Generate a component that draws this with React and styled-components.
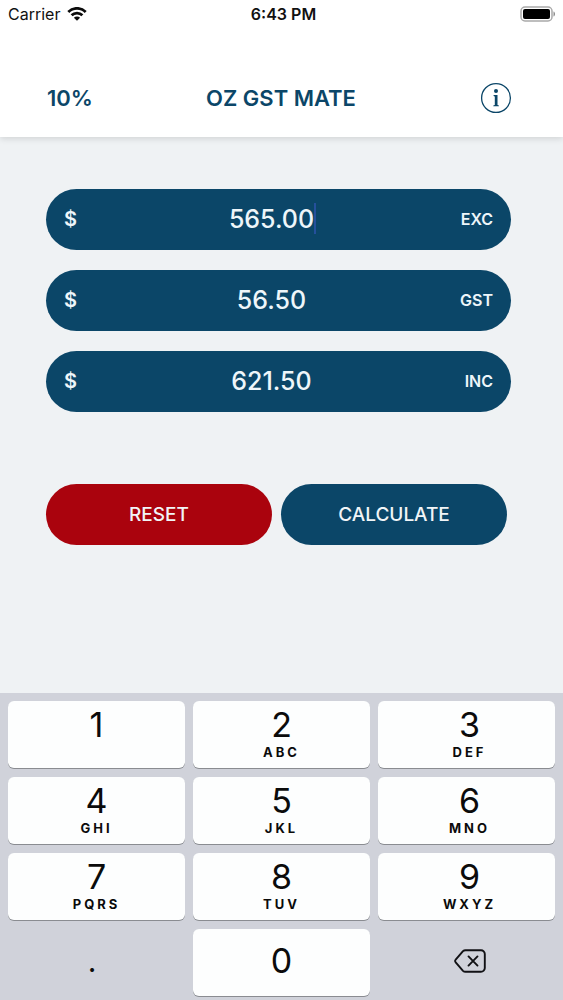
import React, { useState } from 'react';
import styled, { createGlobalStyle } from 'styled-components';

const GST_RATE = 0.1;

const KEYS = [
  { digit: '1' },
  { digit: '2', letters: 'ABC' },
  { digit: '3', letters: 'DEF' },
  { digit: '4', letters: 'GHI' },
  { digit: '5', letters: 'JKL' },
  { digit: '6', letters: 'MNO' },
  { digit: '7', letters: 'PQRS' },
  { digit: '8', letters: 'TUV' },
  { digit: '9', letters: 'WXYZ' },
];

const WifiIcon = () => (
  <svg width="20" height="14" viewBox="0 0 20 14" aria-label="Wi-Fi">
    <g fill="none" stroke="#0b0b0b" strokeWidth="2.8">
      <path d="M1.3 4.9a12.4 12.4 0 0 1 17.4 0" />
      <path d="M4.6 8.3a7.7 7.7 0 0 1 10.8 0" />
    </g>
    <path d="M10 13.8 6.9 10.7a4.4 4.4 0 0 1 6.2 0Z" fill="#0b0b0b" />
  </svg>
);

const BatteryIcon = () => (
  <svg width="36" height="16" viewBox="0 0 36 16" aria-label="Battery">
    <rect x="1" y="1" width="31" height="14" rx="4" fill="#fff" stroke="#a9a9a9" strokeWidth="1.5" />
    <rect x="3" y="3" width="27" height="10" rx="2" fill="#000" />
    <path d="M33.5 5.5c2 .6 2 4.4 0 5Z" fill="#8a8a8a" />
  </svg>
);

const InfoIcon = () => (
  <svg width="32" height="32" viewBox="0 0 32 32" aria-hidden="true">
    <circle cx="16" cy="16" r="14.4" fill="none" stroke="#0b4668" strokeWidth="1.3" />
    <circle cx="16" cy="8.9" r="2" fill="#0b4668" />
    <path d="M13.6 13.1h3.9v10l1.4.3v.8h-5.6v-.8l1.5-.3v-8.600l-1.200-.4Z" fill="#0b4668" />
  </svg>
);

const DeleteIcon = () => (
  <svg width="32" height="24" viewBox="0 0 32 24" aria-hidden="true">
    <g fill="none" stroke="#111114" strokeWidth="1.9" strokeLinecap="round" strokeLinejoin="round">
      <path d="M11.5 1.2H27a3.8 3.8 0 0 1 3.8 3.8v14a3.8 3.8 0 0 1-3.8 3.8H11.5c-1 0-1.800-.3-2.5-1L1.700 13.300c-.8-.8-.8-1.800 0-2.600L9 2.200c.7-.7 1.500-1 2.500-1Z" />
      <path d="m14.500 7.400 9 9.200M23.500 7.400l-9 9.200" />
    </g>
  </svg>
);

const App = () => {
  const [amounts, setAmounts] = useState({ exc: '565.00', gst: '56.50', inc: '621.50' });
  const [active, setActive] = useState('exc');

  const setAmount = (value) => setAmounts({ ...amounts, [active]: value });

  const handleReset = () => setAmounts({ exc: '', gst: '', inc: '' });

  const handleCalculate = () => {
    const value = parseFloat(amounts[active]) || 0;
    let exc = value;
    if (active === 'gst') exc = value / GST_RATE;
    if (active === 'inc') exc = value / (1 + GST_RATE);
    const gst = exc * GST_RATE;
    setAmounts({ exc: exc.toFixed(2), gst: gst.toFixed(2), inc: (exc + gst).toFixed(2) });
  };

  return (
    <Screen>
      <GlobalStyle />
      <StatusBar>
        <Carrier>
          Carrier
          <WifiIcon />
        </Carrier>
        <Clock>6:43 PM</Clock>
        <Battery>
          <BatteryIcon />
        </Battery>
      </StatusBar>

      <Header>
        <RateButton type="button">10%</RateButton>
        <Title>OZ GST MATE</Title>
        <InfoButton type="button" aria-label="Information">
          <InfoIcon />
        </InfoButton>
      </Header>

      <Main>
        <Fields>
          {['exc', 'gst', 'inc'].map((name) => (
            <Field key={name}>
              <Currency>$</Currency>
              <ValueBox>
                <Value
                  id={name}
                  inputMode="none"
                  value={amounts[name]}
                  onFocus={() => setActive(name)}
                  onChange={(e) => setAmounts({ ...amounts, [name]: e.target.value })}
                />
                {active === name && <Caret $chars={amounts[name].length} />}
              </ValueBox>
              <FieldLabel htmlFor={name}>{name.toUpperCase()}</FieldLabel>
            </Field>
          ))}
        </Fields>
        <Actions>
          <ActionButton type="button" $color="#aa030d" onClick={handleReset}>RESET</ActionButton>
          <ActionButton type="button" $color="#0b4668" onClick={handleCalculate}>CALCULATE</ActionButton>
        </Actions>
      </Main>

      <Keypad>
        {KEYS.map(({ digit, letters }) => (
          <Key key={digit} type="button" onClick={() => setAmount(amounts[active] + digit)}>
            <Digit>{digit}</Digit>
            <Letters>{letters}</Letters>
          </Key>
        ))}
        <PlainKey type="button" onClick={() => setAmount(amounts[active] + '.')}>
          <Point>.</Point>
        </PlainKey>
        <Key type="button" $centered onClick={() => setAmount(amounts[active] + '0')}>
          <Digit>0</Digit>
        </Key>
        <PlainKey
          type="button"
          aria-label="Delete"
          onClick={() => setAmount(amounts[active].slice(0, -1))}
        >
          <DeleteIcon />
        </PlainKey>
      </Keypad>
    </Screen>
  );
};

const GlobalStyle = createGlobalStyle`
  * {
    box-sizing: border-box;
  }

  body {
    margin: 0;
    font-family: Inter, "Liberation Sans", sans-serif;
    background: #eff2f5;
  }

  button,
  input {
    margin: 0;
    padding: 0;
    border: none;
    font-family: inherit;
  }

  button {
    cursor: pointer;
  }

  svg {
    display: block;
  }
`;

const Screen = styled.div`
  display: flex;
  flex-direction: column;
  min-height: 100vh;
`;

const StatusBar = styled.div`
  position: relative;
  z-index: 1;
  display: grid;
  grid-template-columns: 1fr auto 1fr;
  align-items: center;
  height: 28px;
  padding: 0 7px 0 8px;
  background: #fff;
  color: #111;
  font-size: 16px;
`;

const Carrier = styled.div`
  display: flex;
  align-items: center;
  gap: 7px;
`;

const Clock = styled.div`
  padding-left: 3px;
  font-weight: 600;
`;

const Battery = styled.div`
  justify-self: end;
`;

const Header = styled.header`
  position: relative;
  display: grid;
  grid-template-columns: 1fr auto 1fr;
  align-items: center;
  padding: 54px 51px 23px 47px;
  background: #fff;
  box-shadow: 0 2px 6px rgba(0, 0, 0, 0.12);
  color: #0b4668;
`;

const RateButton = styled.button`
  justify-self: start;
  background: none;
  color: inherit;
  font-size: 22px;
  font-weight: 600;
`;

const Title = styled.h1`
  margin: 0;
  padding-left: 3px;
  font-size: 22px;
  font-weight: 600;
`;

const InfoButton = styled.button`
  justify-self: end;
  background: none;
`;

const Main = styled.main`
  flex: 1;
  padding: 52px 52px 52px 46px;
  background: #eff2f4;
`;

const Fields = styled.div`
  display: flex;
  flex-direction: column;
  gap: 20px;
`;

const Field = styled.div`
  display: flex;
  align-items: center;
  height: 61px;
  padding: 0 18px 2px;
  border-radius: 31px;
  background: #0b4668;
  color: #eef6fa;
`;

const Currency = styled.span`
  width: 28px;
  font-size: 20px;
  font-weight: 600;
`;

const ValueBox = styled.div`
  position: relative;
  flex: 1;
`;

const Value = styled.input`
  display: block;
  width: 100%;
  background: none;
  outline: none;
  caret-color: transparent;
  color: inherit;
  font-size: 25px;
  font-weight: 500;
  line-height: 32px;
  text-align: center;
`;

const Caret = styled.span`
  position: absolute;
  top: 0;
  left: calc(50% + ${({ $chars }) => $chars * 7}px);
  width: 2px;
  height: 31px;
  background: #25509c;
`;

const FieldLabel = styled.label`
  width: 42px;
  font-size: 16px;
  font-weight: 600;
  text-align: right;
`;

const Actions = styled.div`
  display: grid;
  grid-template-columns: 1fr 1fr;
  gap: 9px;
  margin-top: 72px;
  padding-right: 4px;
`;

const ActionButton = styled.button`
  height: 61px;
  border-radius: 31px;
  background: ${({ $color }) => $color};
  color: #f1f5f7;
  font-size: 19px;
  font-weight: 500;
`;

const Keypad = styled.div`
  display: grid;
  grid-template-columns: repeat(3, 1fr);
  grid-auto-rows: 67px;
  gap: 9px 8px;
  padding: 8px 8px 4px;
  background: #d0d2da;

  > :nth-child(3n) {
    padding-left: 6px;
  }
`;

const Key = styled.button`
  display: flex;
  flex-direction: column;
  align-items: center;
  justify-content: ${({ $centered }) => ($centered ? 'center' : 'flex-start')};
  padding-top: ${({ $centered }) => ($centered ? '0' : '4px')};
  padding-bottom: 4px;
  border-radius: 6px;
  background: #fdfefe;
  box-shadow: 0 1px 0 #8a8c91;
  color: #0b0b0b;
`;

const Digit = styled.span`
  font-size: 34px;
  line-height: 40px;
`;

const Letters = styled.span`
  font-size: 13px;
  font-weight: 700;
  line-height: 14px;
  letter-spacing: 3px;
`;

const PlainKey = styled.button`
  display: flex;
  align-items: center;
  justify-content: center;
  padding-bottom: 4px;
  background: none;
  color: #0b0b0b;
`;

const Point = styled.span`
  padding-right: 9px;
  font-size: 30px;
  line-height: 50px;
`;

export default App;
